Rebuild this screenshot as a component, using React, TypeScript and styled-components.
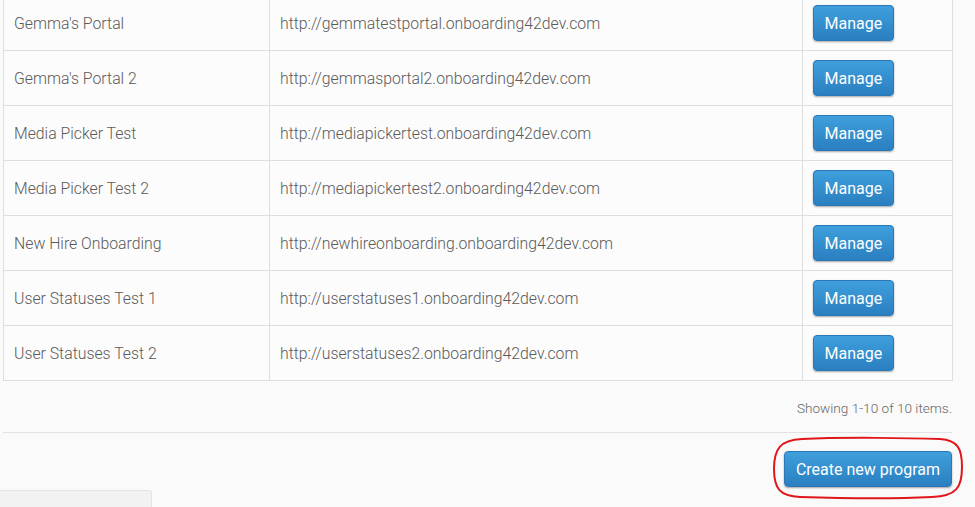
import React from "react";
import styled, { createGlobalStyle } from "styled-components";

const Global = createGlobalStyle`
  html, body { margin: 0; padding: 0; background: #fafafa; }
  body { font-family: Roboto, "Noto Sans", Arial, sans-serif; overflow: hidden; }
`;

const Page = styled.div`
  width: 975px;
  height: 507px;
  overflow: hidden;
  display: flex;
  flex-direction: column;
`;

const Content = styled.div`
  margin-top: -5px;
  padding-left: 3px;
  width: 949px;
  display: flex;
  flex-direction: column;
`;

const Table = styled.table`
  border-collapse: collapse;
  width: 949px;
  table-layout: fixed;
  background: #fcfcfc;
`;

const Cell = styled.td<{ $w: number }>`
  width: ${(p) => p.$w}px;
  height: 55px;
  box-sizing: border-box;
  border: 1px solid #dedede;
  padding: 0 10px;
  font-size: 15.8px;
  font-weight: 300;
  color: #5a5a5a;
  vertical-align: middle;
  white-space: nowrap;
`;

const Button = styled.button<{ $pad: number }>`
  font-family: Roboto, "Noto Sans", Arial, sans-serif;
  font-size: 16px;
  font-weight: 400;
  color: #fff;
  height: 36px;
  padding: 0 ${(p) => p.$pad}px;
  border: 1px solid #2b78b6;
  border-radius: 4px;
  background: linear-gradient(#3f9fdc, #2a7fc0);
  box-shadow: 0 1px 2px rgba(0, 0, 0, 0.35);
  cursor: pointer;
  display: inline-flex;
  align-items: center;
  justify-content: center;
`;

const Summary = styled.div`
  height: 52px;
  display: flex;
  align-items: center;
  justify-content: flex-end;
  font-size: 13.6px;
  font-weight: 300;
  color: #666;
  border-bottom: 1px solid #e2e2e2;
  padding-top: 2px;
  box-sizing: border-box;
`;

const Actions = styled.div`
  display: flex;
  justify-content: flex-end;
  padding-top: 18px;
`;

const Highlight = styled.div`
  position: relative;
  display: inline-flex;
`;

const Ring = styled.svg`
  position: absolute;
  left: -12px;
  top: -14px;
  pointer-events: none;
  overflow: visible;
`;

const Footer = styled.div`
  margin-top: 3px;
  width: 151px;
  height: 20px;
  background: #f2f2f2;
  border-top: 1px solid #e4e4e4;
  border-right: 1px solid #e4e4e4;
  border-top-right-radius: 3px;
`;

const rows = [
  ["Gemma's Portal", "http://gemmatestportal.onboarding42dev.com"],
  ["Gemma's Portal 2", "http://gemmasportal2.onboarding42dev.com"],
  ["Media Picker Test", "http://mediapickertest.onboarding42dev.com"],
  ["Media Picker Test 2", "http://mediapickertest2.onboarding42dev.com"],
  ["New Hire Onboarding", "http://newhireonboarding.onboarding42dev.com"],
  ["User Statuses Test 1", "http://userstatuses1.onboarding42dev.com"],
  ["User Statuses Test 2", "http://userstatuses2.onboarding42dev.com"],
];

export default function App() {
  return (
    <Page>
      <Global />
      <Content>
        <Table>
          <tbody>
            {rows.map(([name, url]) => (
              <tr key={name}>
                <Cell $w={266}>{name}</Cell>
                <Cell $w={533}>{url}</Cell>
                <Cell $w={150}>
                  <Button $pad={10.5}>Manage</Button>
                </Cell>
              </tr>
            ))}
          </tbody>
        </Table>
        <Summary>Showing 1-10 of 10 items.</Summary>
        <Actions>
          <Highlight>
            <Button $pad={11}>Create new program</Button>
            <Ring width="192" height="62" viewBox="0 0 192 62">
              <path
                d="M30 2 C70 0 140 1 168 2 C186 3 190 12 190 30 C190 50 185 59 160 60 C120 62 60 61 28 60 C8 59 2 52 2 32 C2 12 8 3 30 2 Z"
                fill="none"
                stroke="#e0161b"
                strokeWidth="2"
              />
            </Ring>
          </Highlight>
        </Actions>
      </Content>
      <Footer />
    </Page>
  );
}
